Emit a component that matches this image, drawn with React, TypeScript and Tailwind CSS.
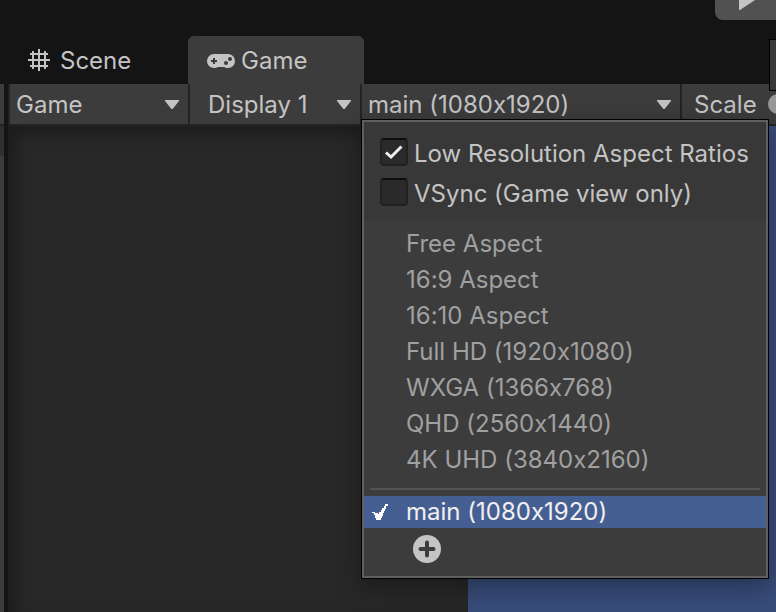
import React from "react";

const ASPECTS = [
  "Free Aspect",
  "16:9 Aspect",
  "16:10 Aspect",
  "Full HD (1920x1080)",
  "WXGA (1366x768)",
  "QHD (2560x1440)",
  "4K UHD (3840x2160)",
];

const Arrow = () => (
  <svg
    viewBox="0 0 14 9"
    className="pointer-events-none absolute right-[9px] top-4 h-[9px] w-[14px] fill-[#c4c4c4]"
  >
    <path d="M0 0h14v1L8 8.500Q7 9.500 6 8.500L0 1z" />
  </svg>
);

const Dropdown = ({ label, className }: { label: string; className: string }) => (
  <>
    <select
      aria-label={label}
      className={"h-10 w-full appearance-none bg-transparent pt-0.5 outline-none " + className}
    >
      <option>{label}</option>
    </select>
    <Arrow />
  </>
);

const GridIcon = () => (
  <svg viewBox="0 0 22 22" className="size-[22px] stroke-[#c4c4c4]" strokeWidth="2">
    <path d="M5 2v18M11 0v22M17 2v18M2 5h18M0 11h22M2 17h18" />
  </svg>
);

const GamepadIcon = () => (
  <svg viewBox="0 0 28 14" className="h-[14px] w-7">
    <path
      d="M7 0h14a7 7 0 0 1 0 14c-2 0-3-.5-4-1h-6c-1 .5-2 1-4 1A7 7 0 0 1 7 0z"
      fill="#c4c4c4"
    />
    <path d="M4 7h6M7 4v6" stroke="#3c3c3c" strokeWidth="2" />
    <circle cx="23" cy="5" r="2" fill="#3c3c3c" />
    <circle cx="19" cy="9" r="2" fill="#3c3c3c" />
  </svg>
);

const MenuToggle = ({ label, checked }: { label: string; checked?: boolean }) => (
  <label className="flex h-10 items-center gap-[6px]">
    <span className="relative size-7">
      <input
        type="checkbox"
        defaultChecked={checked}
        className="peer block size-7 appearance-none rounded-[4px] border-2 border-[#212121] border-t-[#0d0d0d] bg-[#2a2a2a]"
      />
      <svg
        viewBox="0 0 28 28"
        className="pointer-events-none absolute inset-0 hidden size-7 fill-none stroke-[#eeeeee] peer-checked:block"
        strokeWidth="3"
      >
        <path d="M6 14.500L11 19L21.500 8.500" />
      </svg>
    </span>
    <span className="pt-1">{label}</span>
  </label>
);

const AspectMenu = () => (
  <div className="absolute -left-px top-[35px] z-10 w-[408px] border border-black bg-[#3c3c3c] shadow-[0_8px_24px_rgba(0,0,0,0.35)]">
    <div className="border-2 border-[#5f5f5f] pb-[13px]">
      <div className="bg-[#383838] px-4 pb-[8px] pt-[10px]">
        <MenuToggle label="Low Resolution Aspect Ratios" checked />
        <MenuToggle label="VSync (Game view only)" />
      </div>
      <ul className="pb-[10px] pt-[6px] text-[#a0a0a0]">
        {ASPECTS.map((name) => (
          <li key={name}>
            <button className="block h-9 w-full pl-[42px] text-left">{name}</button>
          </li>
        ))}
      </ul>
      <hr className="mx-[6px] mb-[6px] border-t-2 border-[#535353]" />
      <button className="flex h-8 w-full items-center bg-[#465f92] pl-2 text-left text-[#f0f0f0]">
        <svg viewBox="0 0 16 16" className="mr-[18px] size-4 fill-white">
          <path d="M0 8h3v1h3v1h1V8h2V6h1V4h2V2h1V0h3v2h-2v3h-1v2h-1v2h-1v3h-1v2H9v2H4v-2H3v-3H2v-2H0z" />
        </svg>
        main (1080x1920)
      </button>
      <button aria-label="Add" className="ml-[49px] mt-[7px] block size-7">
        <svg viewBox="0 0 28 28" className="size-7">
          <circle cx="14" cy="14" r="14" fill="#c4c4c4" />
          <path d="M7.500 14h13M14 7.500v13" stroke="#3c3c3c" strokeWidth="4" strokeLinecap="round" />
        </svg>
      </button>
    </div>
  </div>
);

const App = () => {
  return (
    <div className="flex h-screen flex-col overflow-hidden bg-[#141414] font-['Inter',sans-serif] text-2xl text-[#c4c4c4] [font-feature-settings:'calt'_0]">
      <header className="relative flex h-[84px] shrink-0 justify-between pl-2">
        <div className="flex items-end">
          <button className="flex h-12 w-[180px] items-center gap-[10px] pl-5">
            <GridIcon />
            <span className="pt-0.5">Scene</span>
          </button>
          <button className="flex h-12 w-[176px] items-center gap-[6px] rounded-t-[6px] bg-[#3c3c3c] pl-[19px] pt-0.5">
            <GamepadIcon />
            Game
          </button>
        </div>
        <button
          aria-label="Play"
          className="h-5 w-[61px] overflow-hidden rounded-bl-[8px] bg-[#515151] pl-6"
        >
          <svg viewBox="0 0 20 20" className="size-5 fill-[#c4c4c4]">
            <path d="M0 0H16L1 10H0z" />
          </svg>
        </button>
        <div className="absolute -right-1 top-[39px] z-10 h-[52px] w-[11px] border border-black bg-[#383838]" />
      </header>

      <div className="flex flex-1">
        <aside className="w-1 shrink-0 bg-[#3c3c3c]">
          <div className="h-10" />
          <div className="h-8 border-t-2 border-[#232323] bg-[#303030]" />
        </aside>
        <main className="ml-1 flex min-w-0 flex-1 flex-col">
          <div className="flex h-[42px] shrink-0 border-b-2 border-l-2 border-[#232323] bg-[#3c3c3c]">
            <div className="relative w-[180px] shrink-0 border-r-2 border-[#232323]">
              <Dropdown label="Game" className="pl-[6px]" />
            </div>
            <div className="relative w-[172px] shrink-0 border-r-2 border-[#232323]">
              <Dropdown label="Display 1" className="pl-[18px]" />
            </div>
            <div className="relative w-[320px] shrink-0 border-r-2 border-[#232323]">
              <Dropdown label="main (1080x1920)" className="pl-[6px]" />
              <AspectMenu />
            </div>
            <div className="flex items-center gap-[11px] overflow-hidden pl-3">
              <span className="pt-0.5">Scale</span>
              <span className="size-5 shrink-0 rounded-full bg-[#999999]" />
            </div>
          </div>
          <div className="flex flex-1">
            <div className="w-[460px] shrink-0 bg-[#282828] shadow-[inset_8px_8px_16px_rgba(0,0,0,0.3)]" />
            <div className="flex-1 bg-[#384c7a]" />
          </div>
        </main>
      </div>
    </div>
  );
};

export default App;
